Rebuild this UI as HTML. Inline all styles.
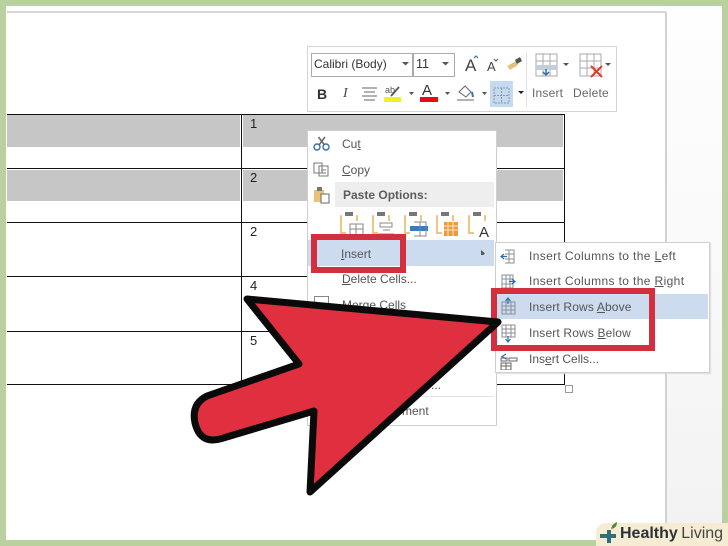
<!DOCTYPE html>
<html><head><meta charset="utf-8"><style>
html,body{margin:0;padding:0;background:#fff}
#p{position:relative;width:728px;height:546px;overflow:hidden;background:#fff;font-family:"Liberation Sans",sans-serif}
.a{position:absolute}
.t{position:absolute;white-space:nowrap;font-size:12px;color:#555;line-height:14px}
.k{position:absolute;background:#111}
u{text-underline-offset:1px}
</style></head><body><div id="p">
<div class="a" style="left:667px;top:6px;width:55px;height:534px;background:linear-gradient(#fefefe,#fafafa 40%,#f2f2f2)"></div>
<div class="a" style="left:7px;top:11px;width:659px;height:2px;background:#d6d6d6"></div>
<div class="a" style="left:665px;top:12px;width:2px;height:528px;background:#d2d2d2"></div>

<!-- table -->
<div class="a" style="left:7px;top:115px;width:233px;height:32px;background:#c6c6c6"></div>
<div class="a" style="left:243px;top:115px;width:320px;height:32px;background:#c6c6c6"></div>
<div class="a" style="left:7px;top:170px;width:233px;height:31px;background:#c6c6c6"></div>
<div class="a" style="left:243px;top:170px;width:320px;height:31px;background:#c6c6c6"></div>
<div class="k" style="left:7px;top:114px;width:558px;height:1px"></div>
<div class="k" style="left:7px;top:168px;width:558px;height:1px"></div>
<div class="k" style="left:7px;top:222px;width:558px;height:1px"></div>
<div class="k" style="left:7px;top:276px;width:558px;height:1px"></div>
<div class="k" style="left:7px;top:331px;width:558px;height:1px"></div>
<div class="k" style="left:7px;top:384px;width:558px;height:1px"></div>
<div class="k" style="left:241px;top:114px;width:1px;height:271px"></div>
<div class="k" style="left:564px;top:114px;width:1px;height:271px"></div>
<div class="t" style="left:250px;top:117px;color:#222;font-size:13px">1</div>
<div class="t" style="left:250px;top:171px;color:#222;font-size:13px">2</div>
<div class="t" style="left:250px;top:225px;color:#222;font-size:13px">2</div>
<div class="t" style="left:250px;top:279px;color:#222;font-size:13px">4</div>
<div class="t" style="left:250px;top:334px;color:#222;font-size:13px">5</div>
<div class="a" style="left:565px;top:385px;width:6px;height:6px;border:1px solid #999;background:#fff"></div>

<!-- mini toolbar -->
<div class="a" style="left:307px;top:46px;width:308px;height:64px;border:1px solid #d4d4d4;background:#fff"></div>
<div class="a" style="left:311px;top:53px;width:101px;height:22px;border:1px solid #aaa"></div>
<div class="a" style="left:412px;top:53px;width:41px;height:22px;border:1px solid #aaa"></div>
<div class="t" style="left:314px;top:57px;color:#333;font-size:12px">Calibri (Body)</div>
<div class="t" style="left:416px;top:57px;color:#333;font-size:12.500px">11</div>
<div class="t" style="left:465px;top:59px;color:#444;font-size:17px">A</div>
<div class="t" style="left:487px;top:60px;color:#444;font-size:13px">A</div>
<div class="t" style="left:317px;top:87px;color:#333;font-size:14px;font-weight:bold">B</div>
<div class="t" style="left:343px;top:87px;color:#444;font-size:14px;font-style:italic;font-family:'Liberation Serif',serif">I</div>
<div class="t" style="left:422px;top:84px;color:#333;font-size:15px">A</div>
<div class="t" style="left:385px;top:83px;color:#555;font-size:9px">ab</div>
<div class="t" style="left:532px;top:86px;font-size:12px;color:#666;letter-spacing:.2px">Insert</div>
<div class="t" style="left:573px;top:86px;font-size:12px;color:#666;letter-spacing:.2px">Delete</div>
<div class="a" style="left:490px;top:81px;width:23px;height:26px;background:#c5d9f1"></div>
<div class="a" style="left:526px;top:52px;width:1px;height:55px;background:#e2e2e2"></div>
<svg class="a" style="left:300px;top:40px" width="325" height="75" viewBox="300 40 325 75" fill="none">
<g fill="#555"><path d="M402 62h7l-3.500 3.500zM442 62h7l-3.500 3.500zM563 63h6l-3 3zM605 63h6l-3 3zM409 92h5l-2.500 3zM445 92h5l-2.500 3zM482 92h5l-2.500 3z"/><path d="M518 91h6l-3 3z" fill="#222"/></g>
<path d="M474 58l2-2 2 2M494 59l2 2 2-2" stroke="#3a6ea5" stroke-width="1.200"/>
<path d="M507 66l9-5 2 4-8 5z" fill="#e5c07b"/><path d="M515 60l5-3 2 4-5 3z" fill="#555"/>
<path d="M362 88h15M364 92h11M362 96h15M364 100h11" stroke="#666" stroke-width="1.100"/>
<rect x="384" y="97" width="17" height="5" fill="#f6ee22"/>
<path d="M391 96l8-9" stroke="#555" stroke-width="1.800"/>
<rect x="420" y="97" width="18" height="5" fill="#e60d14"/>
<path d="M459 92l6-6 6 6-5 5z" stroke="#666"/><path d="M472 92l1 5" stroke="#2a7ab5" stroke-width="2"/><path d="M457 100h17" stroke="#999" stroke-width="1.500"/>
<path d="M494 88h15v15h-15zM501.500 88v15M494 95.500h15" stroke="#8a97a8" stroke-dasharray="2 1"/>
<path d="M536 54h21v22h-21zM536 61h21M536 68h21M543 54v22M550 54v22" stroke="#aaa"/><rect x="536" y="65" width="21" height="5" fill="#c4ced9"/>
<path d="M546 69v6M543 72l3 3 3-3" stroke="#2a6fb5" stroke-width="1.500"/>
<path d="M580 54h21v22h-21zM580 61h21M580 68h21M587 54v22M594 54v22" stroke="#aaa"/>
<path d="M591 66l11 11M602 66l-11 11" stroke="#e03a2a" stroke-width="2"/>
</svg>

<!-- context menu -->
<div class="a" style="left:307px;top:130px;width:188px;height:294px;border:1px solid #cfcfcf;background:#fff"></div>
<div class="a" style="left:335px;top:182px;width:159px;height:25px;background:#eee"></div>
<div class="a" style="left:308px;top:240px;width:186px;height:26px;background:#ccdbee"></div>
<div class="t" style="left:342px;top:137px">Cu<u>t</u></div>
<div class="t" style="left:342px;top:163px"><u>C</u>opy</div>
<div class="t" style="left:343px;top:188px;font-weight:bold;color:#5c5c5c">Paste Options:</div>
<div class="t" style="left:341px;top:247px"><u>I</u>nsert</div>
<div class="t" style="left:342px;top:272px"><u>D</u>elete Cells...</div>
<div class="t" style="left:342px;top:298px">Merge Cells</div>
<div class="a" style="left:314px;top:296px;width:13px;height:10px;border:1px solid #888"></div>
<div class="t" style="left:402px;top:404px">ment</div>
<div class="t" style="left:431px;top:378px">...</div>
<div class="a" style="left:310px;top:396px;width:184px;height:1px;background:#e4e4e4"></div>
<svg class="a" style="left:305px;top:130px" width="195" height="125" viewBox="305 130 195 125" fill="none">
<circle cx="317" cy="147" r="3" stroke="#3a6ea5" stroke-width="1.400"/><circle cx="326" cy="147" r="3" stroke="#3a6ea5" stroke-width="1.400"/>
<path d="M318.500 137l6 8M325 137l-6 8" stroke="#666" stroke-width="1.500"/>
<path d="M314 163h8v10h-8zM319 166h9v10h-9zM321 170h5M321 173h5" stroke="#777"/>
<rect x="314" y="190" width="10" height="12" fill="#e8c27a"/><rect x="317" y="187" width="5" height="4" fill="#777"/><rect x="321" y="194" width="8" height="9" fill="#fff" stroke="#666"/>
<g stroke="#e5b45f" stroke-width="1.500">
<path d="M342 216h-1v17h5M356 216h1v5M374 216h-1v17h5M388 216h1v5M406 216h-1v17h5M420 216h1v5M438 216h-1v17h5M452 216h1v5M470 216h-1v17h5M484 216h1v5"/></g>
<g fill="#777"><rect x="345" y="212" width="8" height="4"/><rect x="377" y="212" width="8" height="4"/><rect x="409" y="212" width="8" height="4"/><rect x="441" y="212" width="8" height="4"/><rect x="473" y="212" width="8" height="4"/></g>
<path d="M350 224h13v11h-13zM350 229h13M356 224v11M380 223h12v4h-12zM383 230h7M378 234h16" stroke="#888"/>
<rect x="410" y="226" width="18" height="5" fill="#3a7ac0"/><path d="M414 222h12v14h-12M420 222v14" stroke="#888"/>
<rect x="444" y="222" width="14" height="14" fill="#ee9a3a"/><path d="M444 226h14M444 230h14M448 222v14M453 222v14" stroke="#fff" stroke-width=".700"/>
<text x="479" y="237" font-family="Liberation Sans" font-size="15" fill="#333">A</text>
<path d="M481 250l4 3.500-4 3.500z" fill="#555"/>
</svg>

<!-- submenu -->
<div class="a" style="left:495px;top:242px;width:213px;height:129px;border:1px solid #cfcfcf;background:#fff;box-shadow:1px 1px 1px #ddd"></div>
<div class="a" style="left:496px;top:294px;width:212px;height:25px;background:#ccdbee"></div>
<div class="t" style="left:529px;top:249px;letter-spacing:.37px">Insert Columns to the <u>L</u>eft</div>
<div class="t" style="left:529px;top:274px;letter-spacing:.37px">Insert Columns to the <u>R</u>ight</div>
<div class="t" style="left:529px;top:300px;letter-spacing:.15px">Insert Rows <u>A</u>bove</div>
<div class="t" style="left:529px;top:326px;letter-spacing:.15px">Insert Rows <u>B</u>elow</div>
<div class="t" style="left:529px;top:352px">Ins<u>e</u>rt Cells...</div>
<svg class="a" style="left:497px;top:245px" width="30" height="125" viewBox="497 245 30 125" fill="none" stroke="#8a8f96">
<path d="M505 250h9v13h-9M509 250v13M505 254h9M505 259h9"/><path d="M507 256.500h-6M504 254l-3 2.500 3 2.500" stroke="#2a6fb5" stroke-width="1.200"/>
<path d="M502 275h11v13h-11zM506 275v13M510 275v13M502 279h11M502 284h11"/><path d="M509 281.500h6M512 279l3 2.500-3 2.500" stroke="#2a6fb5" stroke-width="1.200"/>
<path d="M502 302h13v12h-13zM506 302v12M511 302v12M502 306h13M502 310h13"/><path d="M508 304v-5M505.500 301l2.500-3 2.500 3" stroke="#2a6fb5" stroke-width="1.200"/>
<path d="M502 325h13v12h-13zM506 325v12M511 325v12M502 329h13M502 333h13"/><path d="M508 336v5M505.500 339l2.500 3 2.500-3" stroke="#2a6fb5" stroke-width="1.200"/>
<path d="M501 358h6v3h-6zM509 358h8v3h-8zM501 363h10v7h-10zM506 363v7M501 366h10" stroke="#666"/><path d="M506 354l-4 2.500 4 2.500" stroke="#2a6fb5" stroke-width="1.200"/>
</svg>

<!-- red highlight boxes -->
<div class="a" style="left:311px;top:234px;border:6px solid #d32f3f;width:83px;height:27px"></div>
<div class="a" style="left:491px;top:288px;width:152px;height:51px;border:6px solid #d32f3f"></div>

<!-- arrow -->
<svg class="a" style="left:0;top:0" width="728" height="546" viewBox="0 0 728 546">
<path d="M247 299L498 322L310 492L314 411L220 439Q200 444 195 423Q191 404 207 396L299 364Z" fill="#e03040" stroke="#0a0a0a" stroke-width="7" stroke-linejoin="round"/>
</svg>

<!-- frame -->
<div class="a" style="left:0;top:0;width:728px;height:6px;background:#b9d09f"></div>
<div class="a" style="left:0;top:0;width:6px;height:546px;background:#b9d09f"></div>
<div class="a" style="left:722px;top:0;width:6px;height:546px;background:#b9d09f"></div>
<div class="a" style="left:0;top:540px;width:728px;height:6px;background:#b9d09f"></div>

<!-- logo -->
<div class="a" style="left:596px;top:523px;width:132px;height:23px;background:#f5ecd3;border-radius:10px 0 0 0"></div>
<svg class="a" style="left:598px;top:521px" width="24" height="25" viewBox="0 0 24 25">
<path d="M9 11h4v4h5v4h-5v5H9v-5H2v-4h7z" fill="#2f6f7a" transform="translate(0 -2)"/>
<path d="M13 8q1-5 6-7q0 6-6 7z" fill="#4a8a3a"/>
</svg>
<div class="t" style="left:620px;top:525px;font-size:16px;line-height:18px;font-weight:bold;color:#2b3338">Healthy <span style="font-weight:normal;color:#444;margin-left:-1px">Living</span></div>
</div></body></html>
